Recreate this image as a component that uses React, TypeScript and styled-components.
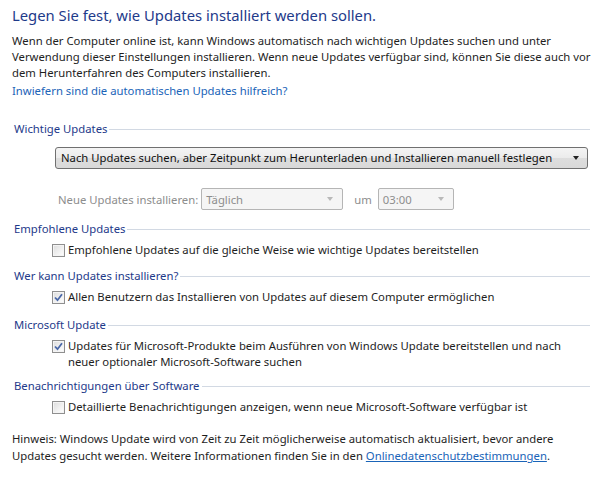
import styled, { createGlobalStyle } from 'styled-components';

const GlobalStyle = createGlobalStyle`
  html, body {
    margin: 0;
    padding: 0;
    background: #ffffff;
  }
  body {
    font-family: 'Noto Sans', 'Open Sans', 'DejaVu Sans', sans-serif;
    font-size: 11.3px;
    color: #1e1e1e;
  }
`;

const Page = styled.div`
  width: 605px;
  height: 477px;
  box-sizing: border-box;
  padding: 5px 12px 0 12px;
  overflow: hidden;
`;

const Title = styled.h1`
  margin: 0;
  font-size: 14.8px;
  font-weight: 400;
  line-height: 20px;
  color: #1e3a8a;
`;

const Paragraph = styled.p<{ $top: number }>`
  margin: ${(p) => p.$top}px 0 0 0;
  line-height: 16px;
  white-space: nowrap;
`;

const Link = styled.a<{ $underline?: boolean }>`
  color: #1a64b8;
  text-decoration: ${(p) => (p.$underline ? 'underline' : 'none')};
  cursor: pointer;
`;

const HelpLink = styled.div`
  margin-top: 2px;
  line-height: 16px;
`;

const Section = styled.section<{ $top: number }>`
  margin-top: ${(p) => p.$top}px;
`;

const SectionHeader = styled.div`
  display: flex;
  align-items: center;
  padding-left: 2px;
  line-height: 16px;
  color: #1e3a8a;

  &::after {
    content: '';
    flex: 1;
    height: 1px;
    margin-left: 2px;
    margin-right: 3px;
    background: #d2d9e3;
  }
`;

const Dropdown = styled.div`
  margin: 10px 5px 0 43px;
  height: 22px;
  box-sizing: border-box;
  border: 1px solid #707070;
  border-radius: 3px;
  background: linear-gradient(#f4f4f4 0%, #ebebeb 50%, #dddddd 51%, #d9d9d9 100%);
  display: flex;
  align-items: center;
  padding: 0 8px 0 5px;
  line-height: 16px;
  color: #111;
`;

const DropText = styled.span`
  flex: 1;
  white-space: nowrap;
`;

const Arrow = styled.span<{ $disabled?: boolean }>`
  width: 0;
  height: 0;
  border-left: 3.5px solid transparent;
  border-right: 3.5px solid transparent;
  border-top: 4px solid ${(p) => (p.$disabled ? '#b9b9b9' : '#222')};
`;

const ScheduleRow = styled.div`
  display: flex;
  align-items: center;
  margin: 19px 0 0 46px;
  height: 22px;
  color: #8d8d8d;
`;

const Combo = styled.div<{ $width: number }>`
  width: ${(p) => p.$width}px;
  height: 22px;
  box-sizing: border-box;
  border: 1px solid #b5b5b5;
  border-radius: 2px;
  background: #f5f5f5;
  display: flex;
  align-items: center;
  padding: 0 9px 0 4px;
  color: #8d8d8d;
`;

const ComboText = styled.span`
  flex: 1;
`;

const RowLabel = styled.span<{ $before: number; $after: number }>`
  margin-left: ${(p) => p.$before}px;
  margin-right: ${(p) => p.$after}px;
`;

const CheckRow = styled.label`
  display: flex;
  align-items: flex-start;
  margin: 5px 0 0 40px;
  line-height: 16px;
`;

const Box = styled.span`
  flex: none;
  width: 13px;
  height: 13px;
  box-sizing: border-box;
  margin-top: 2px;
  margin-right: 3px;
  border: 1px solid #8f8f8f;
  background: linear-gradient(135deg, #dcdcdc 0%, #f2f2f2 60%, #ffffff 100%);
  box-shadow: inset 0 0 0 1px #f4f4f4;
  display: flex;
  align-items: center;
  justify-content: center;
`;

const Note = styled.p`
  margin: 15px 0 0 0;
  line-height: 17px;
  white-space: nowrap;
`;

const Checkbox = ({ checked }: { checked: boolean }) => (
  <Box>
    {checked && (
      <svg width="9" height="9" viewBox="0 0 9 9">
        <path d="M1 4.5 L3.5 7.2 L8 1.2" fill="none" stroke="#4a68a8" strokeWidth="1.8" />
      </svg>
    )}
  </Box>
);

const App = () => {
  return (
    <Page>
      <GlobalStyle />
      <Title>Legen Sie fest, wie Updates installiert werden sollen.</Title>
      <Paragraph $top={8}>
        Wenn der Computer online ist, kann Windows automatisch nach wichtigen Updates suchen und unter
        <br />
        Verwendung dieser Einstellungen installieren. Wenn neue Updates verfügbar sind, können Sie diese auch vor
        <br />
        dem Herunterfahren des Computers installieren.
      </Paragraph>
      <HelpLink>
        <Link>Inwiefern sind die automatischen Updates hilfreich?</Link>
      </HelpLink>

      <Section $top={22}>
        <SectionHeader>Wichtige Updates</SectionHeader>
        <Dropdown>
          <DropText>Nach Updates suchen, aber Zeitpunkt zum Herunterladen und Installieren manuell festlegen</DropText>
          <Arrow />
        </Dropdown>
        <ScheduleRow>
          <RowLabel $before={0} $after={3}>
            Neue Updates installieren:
          </RowLabel>
          <Combo $width={142}>
            <ComboText>Täglich</ComboText>
            <Arrow $disabled />
          </Combo>
          <RowLabel $before={11} $after={6}>
            um
          </RowLabel>
          <Combo $width={76}>
            <ComboText>03:00</ComboText>
            <Arrow $disabled />
          </Combo>
        </ScheduleRow>
      </Section>

      <Section $top={11}>
        <SectionHeader>Empfohlene Updates</SectionHeader>
        <CheckRow>
          <Checkbox checked={false} />
          <span>Empfohlene Updates auf die gleiche Weise wie wichtige Updates bereitstellen</span>
        </CheckRow>
      </Section>

      <Section $top={10}>
        <SectionHeader>Wer kann Updates installieren?</SectionHeader>
        <CheckRow>
          <Checkbox checked />
          <span>Allen Benutzern das Installieren von Updates auf diesem Computer ermöglichen</span>
        </CheckRow>
      </Section>

      <Section $top={12}>
        <SectionHeader>Microsoft Update</SectionHeader>
        <CheckRow>
          <Checkbox checked />
          <span>
            Updates für Microsoft-Produkte beim Ausführen von Windows Update bereitstellen und nach
            <br />
            neuer optionaler Microsoft-Software suchen
          </span>
        </CheckRow>
      </Section>

      <Section $top={8}>
        <SectionHeader>Benachrichtigungen über Software</SectionHeader>
        <CheckRow>
          <Checkbox checked={false} />
          <span>Detaillierte Benachrichtigungen anzeigen, wenn neue Microsoft-Software verfügbar ist</span>
        </CheckRow>
      </Section>

      <Note>
        Hinweis: Windows Update wird von Zeit zu Zeit möglicherweise automatisch aktualisiert, bevor andere
        <br />
        Updates gesucht werden. Weitere Informationen finden Sie in den{' '}
        <Link $underline>Onlinedatenschutzbestimmungen</Link>.
      </Note>
    </Page>
  );
};

export default App;
